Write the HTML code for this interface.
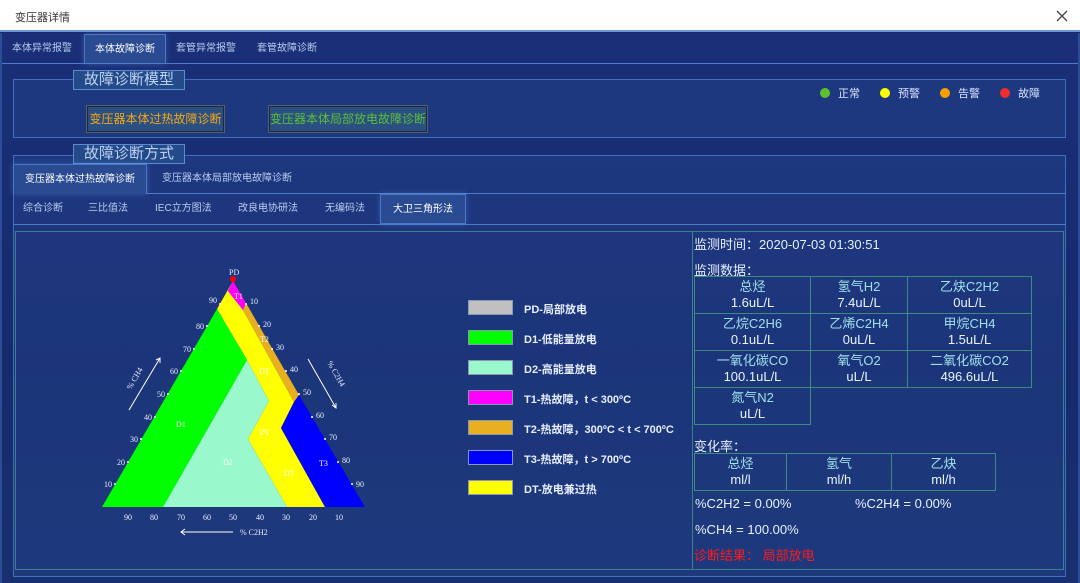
<!DOCTYPE html>
<html><head><meta charset="utf-8"><style>
*{margin:0;padding:0;box-sizing:border-box}
body{width:1080px;height:583px;overflow:hidden;background:#172a6e;font-family:"Liberation Sans","Noto Sans CJK SC",sans-serif;position:relative;color:#cfe0ff}
.abs{position:absolute}
.title{left:0;top:0;width:1080px;height:32px;background:#fff;border-bottom:2px solid #6f95d6}
.title span{position:absolute;left:15px;top:9px;font-size:11px;color:#333}
.title svg{position:absolute;right:12px;top:10px}
.main{left:0;top:33px;width:1080px;height:550px;background:linear-gradient(180deg,#1a2f78 0%,#162a6c 60%,#18306f 100%);border-left:2px solid #2b4c96;border-right:2px solid #2b4c96}
.tab{height:30px;line-height:30px;font-size:10px;color:#b9cdf0;position:absolute}
.tab.on{background:#2a4b92;border:1px solid #4a78c4;color:#fff;box-shadow:0 0 6px rgba(120,170,255,.3)}
.line{height:1px;background:#4d7dca}
.panel{border:1px solid #3f6fbf;background:rgba(40,75,150,.35)}
.legend{border:1px solid #5a8ad4;background:#244a8a;color:#bcd2f2;font-size:15px;text-align:center;line-height:18px}
.btn{height:28px;line-height:26px;font-size:12px;text-align:center;background:#2b4f80;border:1px solid #55606a;box-shadow:inset 0 0 0 1px #1a2a44}
.dot{width:10px;height:10px;border-radius:50%;display:inline-block;margin-right:8px;vertical-align:-1px}
.lg{font-size:11px;color:#d6e4ff}
.legitem{position:absolute;left:468px;font-size:11px;font-weight:bold;color:#e6eeff}
.legitem i{position:absolute;left:0;top:0;width:45px;height:15px;border:1px solid #8898b0}
.legitem span{position:absolute;left:56px;top:1px;white-space:nowrap}
table{border-collapse:collapse;position:absolute}
td{border:1px solid #3c8a80;text-align:center;font-size:13px;line-height:16px;color:#9fe0ea;height:37px}
td b{font-weight:normal;color:#e8f4ff}
.r{font-size:13px;color:#e6f0ff;position:absolute;white-space:nowrap}
</style></head><body>
<div class="abs title"><span>变压器详情</span><svg width="12" height="12"><path d="M1,1 L11,11 M11,1 L1,11" stroke="#444" stroke-width="1.3"/></svg></div>
<div class="abs main"></div>
<div class="tab" style="left:12px;top:34px">本体异常报警</div>
<div class="tab on" style="left:84px;top:34px;width:82px;text-align:center">本体故障诊断</div>
<div class="tab" style="left:176px;top:34px">套管异常报警</div>
<div class="tab" style="left:257px;top:34px">套管故障诊断</div>
<div class="abs line" style="left:2px;top:63px;width:1076px"></div>
<div class="abs panel" style="left:13px;top:79px;width:1053px;height:59px"></div>
<div class="abs legend" style="left:73px;top:70px;width:112px;height:20px">故障诊断模型</div>
<div class="abs lg" style="left:820px;top:85px"><i class="dot" style="background:#5fc02f"></i>正常</div>
<div class="abs lg" style="left:880px;top:85px"><i class="dot" style="background:#ffff00"></i>预警</div>
<div class="abs lg" style="left:940px;top:85px"><i class="dot" style="background:#f5a000"></i>告警</div>
<div class="abs lg" style="left:1000px;top:85px"><i class="dot" style="background:#ee2e2e"></i>故障</div>
<div class="abs btn" style="left:86px;top:105px;width:139px;color:#f2a81a">变压器本体过热故障诊断</div>
<div class="abs btn" style="left:268px;top:105px;width:160px;color:#58c038">变压器本体局部放电故障诊断</div>
<div class="abs panel" style="left:13px;top:155px;width:1053px;height:422px"></div>
<div class="abs legend" style="left:73px;top:144px;width:112px;height:20px">故障诊断方式</div>
<div class="tab on" style="left:13px;top:164px;width:134px;height:30px;text-align:center;border-bottom:none">变压器本体过热故障诊断</div>
<div class="tab" style="left:162px;top:164px">变压器本体局部放电故障诊断</div>
<div class="abs line" style="left:147px;top:193px;width:919px"></div>
<div class="tab" style="left:23px;top:194px">综合诊断</div>
<div class="tab" style="left:88px;top:194px">三比值法</div>
<div class="tab" style="left:155px;top:194px">IEC立方图法</div>
<div class="tab" style="left:238px;top:194px">改良电协研法</div>
<div class="tab" style="left:325px;top:194px">无编码法</div>
<div class="tab on" style="left:380px;top:194px;width:86px;text-align:center">大卫三角形法</div>
<div class="abs line" style="left:13px;top:224px;width:1053px"></div>
<div class="abs" style="left:15px;top:231px;width:1049px;height:339px;border:1px solid #3f7f8a"></div>
<div class="abs" style="left:692px;top:231px;width:1px;height:339px;background:#3f7f8a"></div>
<svg class="abs" style="left:0;top:0" width="470" height="583" font-family="Liberation Serif,serif" font-size="8" fill="#e8eeff">
<polygon points="228,291 243,310 294,402 281,428 325,507 287,507 248,439 269,401 247,360 217,309 233,281" fill="#ffff00"/>
<polygon points="233,281 246,303 243,310 228,291" fill="#ff00ff"/>
<polygon points="246,303 299,395 294,402 243,310" fill="#e8b020"/>
<polygon points="299,395 365,507 325,507 281,428 294,402" fill="#0000ff"/>
<polygon points="102,507 217,309 247,360 163,507" fill="#00ff00"/>
<polygon points="247,360 269,401 248,439 287,507 163,507" fill="#99f8cc"/>
<circle cx="233" cy="279" r="3" fill="#ff0000"/>
<text x="229" y="275">PD</text>
<g font-size="8" fill="#fff">
<text x="234" y="299">T1</text><text x="260" y="342">T2</text><text x="259" y="374">DT</text><text x="259" y="435">DT</text><text x="284" y="476">DT</text><text x="319" y="466">T3</text><text x="176" y="427">D1</text><text x="223" y="465">D2</text>
</g>
<g fill="#fff">
<circle cx="115" cy="484" r="1"/><circle cx="128" cy="462" r="1"/><circle cx="141" cy="439" r="1"/><circle cx="155" cy="417" r="1"/><circle cx="168" cy="394" r="1"/><circle cx="181" cy="371" r="1"/><circle cx="194" cy="349" r="1"/><circle cx="207" cy="326" r="1"/><circle cx="220" cy="304" r="1"/>
<circle cx="246" cy="304" r="1"/><circle cx="259" cy="326" r="1"/><circle cx="272" cy="349" r="1"/><circle cx="286" cy="371" r="1"/><circle cx="299" cy="394" r="1"/><circle cx="312" cy="417" r="1"/><circle cx="325" cy="439" r="1"/><circle cx="338" cy="462" r="1"/><circle cx="352" cy="484" r="1"/>
</g>
<g text-anchor="end"><text x="112" y="487">10</text><text x="125" y="465">20</text><text x="138" y="442">30</text><text x="152" y="420">40</text><text x="165" y="397">50</text><text x="178" y="374">60</text><text x="191" y="352">70</text><text x="204" y="329">80</text><text x="217" y="303">90</text></g>
<g><text x="250" y="304">10</text><text x="263" y="327">20</text><text x="276" y="350">30</text><text x="290" y="372">40</text><text x="303" y="395">50</text><text x="316" y="418">60</text><text x="329" y="440">70</text><text x="342" y="463">80</text><text x="356" y="487">90</text></g>
<g text-anchor="middle"><text x="339" y="520">10</text><text x="313" y="520">20</text><text x="286" y="520">30</text><text x="260" y="520">40</text><text x="233" y="520">50</text><text x="207" y="520">60</text><text x="181" y="520">70</text><text x="154" y="520">80</text><text x="128" y="520">90</text></g>
<text x="240" y="535">% C2H2</text>
<line x1="181" y1="532" x2="233" y2="532" stroke="#fff" stroke-width="1"/><path d="M185,529 L181,532 L185,535" stroke="#fff" fill="none"/>
<line x1="129" y1="410" x2="160" y2="358" stroke="#fff"/><path d="M156,360 L160,358 L160,363" stroke="#fff" fill="none"/>
<text transform="translate(131,390) rotate(-60)">% CH4</text>
<line x1="308" y1="359" x2="336" y2="408" stroke="#fff"/><path d="M332,405 L336,408 L336,403" stroke="#fff" fill="none"/>
<text transform="translate(327,363) rotate(60)">% C2H4</text>
</svg>
<div class="legitem" style="top:300px"><i style="background:#c0c0c0"></i><span>PD-局部放电</span></div>
<div class="legitem" style="top:330px"><i style="background:#00ff00"></i><span>D1-低能量放电</span></div>
<div class="legitem" style="top:360px"><i style="background:#99f8cc"></i><span>D2-高能量放电</span></div>
<div class="legitem" style="top:390px"><i style="background:#ff00ff"></i><span>T1-热故障，t &lt; 300ºC</span></div>
<div class="legitem" style="top:420px"><i style="background:#e8b020"></i><span>T2-热故障，300ºC &lt; t &lt; 700ºC</span></div>
<div class="legitem" style="top:450px"><i style="background:#0000ff"></i><span>T3-热故障，t &gt; 700ºC</span></div>
<div class="legitem" style="top:480px"><i style="background:#ffff00"></i><span>DT-放电兼过热</span></div>
<div class="r" style="left:694px;top:234px">监测时间：2020-07-03 01:30:51</div>
<div class="r" style="left:694px;top:260px">监测数据：</div>
<table style="left:694px;top:276px;width:338px">
<tr><td style="width:116px">总烃<br><b>1.6uL/L</b></td><td style="width:97px">氢气H2<br><b>7.4uL/L</b></td><td>乙炔C2H2<br><b>0uL/L</b></td></tr>
<tr><td>乙烷C2H6<br><b>0.1uL/L</b></td><td>乙烯C2H4<br><b>0uL/L</b></td><td>甲烷CH4<br><b>1.5uL/L</b></td></tr>
<tr><td>一氧化碳CO<br><b>100.1uL/L</b></td><td>氧气O2<br><b>uL/L</b></td><td>二氧化碳CO2<br><b>496.6uL/L</b></td></tr>
<tr><td>氮气N2<br><b>uL/L</b></td><td style="border:none"></td><td style="border:none"></td></tr>
</table>
<div class="r" style="left:694px;top:436px">变化率：</div>
<table style="left:694px;top:453px;width:302px">
<tr><td style="width:92px">总烃<br><b>ml/l</b></td><td style="width:105px">氢气<br><b>ml/h</b></td><td>乙炔<br><b>ml/h</b></td></tr>
</table>
<div class="r" style="left:695px;top:496px">%C2H2 = 0.00%</div>
<div class="r" style="left:855px;top:496px">%C2H4 = 0.00%</div>
<div class="r" style="left:695px;top:522px">%CH4 = 100.00%</div>
<div class="r" style="left:694px;top:545px;color:#ff1a1a">诊断结果： 局部放电</div>
</body></html>
